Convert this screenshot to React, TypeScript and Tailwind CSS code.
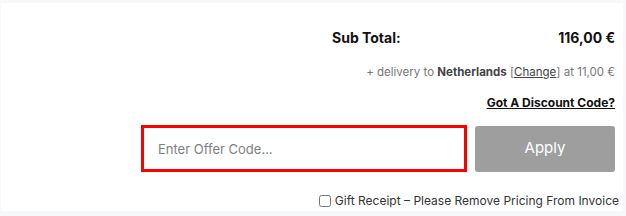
import { useState } from "react";

const font = { fontFamily: '"Inter", "Liberation Sans", sans-serif' };

export default function App() {
  const [code, setCode] = useState("");
  const [gift, setGift] = useState(false);

  return (
    <div className="w-[626px] h-[216px] bg-[#f7f8fa] pt-[3px] pl-px pr-[3px] overflow-hidden" style={font}>
      <div className="h-[208px] bg-white pr-[8px] flex flex-col items-end">
        {/* Sub total */}
        <div className="mt-[26px] w-[283px] h-[18px] flex items-center justify-between text-[14px] font-bold text-[#111] leading-none">
          <span>Sub Total:</span>
          <span>116,00 €</span>
        </div>

        {/* Delivery */}
        <div className="mt-[18px] h-[16px] flex items-center text-[11.5px] text-[#777] leading-none">
          <span>+ delivery to&nbsp;</span>
          <span className="font-bold text-[#444]">Netherlands</span>
          <span>&nbsp;[</span>
          <a href="#" className="underline text-[#444]">Change</a>
          <span>] at 11,00 €</span>
        </div>

        {/* Discount link */}
        <a href="#" className="mt-[14px] h-[16px] flex items-center text-[12px] font-bold text-[#111] underline leading-none">
          Got A Discount Code?
        </a>

        {/* Offer code */}
        <div className="mt-[14px] flex items-center gap-[8px]">
          <input
            value={code}
            onChange={(e) => setCode(e.target.value)}
            placeholder="Enter Offer Code..."
            className="w-[326px] h-[47px] border-[3px] border-[#ff0000] px-[14px] text-[13px] text-[#333] placeholder:text-[#808080] outline-none"
          />
          <button className="w-[140px] h-[46px] rounded-[3px] bg-[#9e9e9e] text-white text-[15px]">
            Apply
          </button>
        </div>

        {/* Gift receipt */}
        <label className="mt-[23px] mr-[-4px] flex items-center gap-[4px] text-[12px] text-[#333] leading-none">
          <input
            type="checkbox"
            checked={gift}
            onChange={(e) => setGift(e.target.checked)}
            className="w-[12px] h-[12px] m-0"
          />
          <span>Gift Receipt – Please Remove Pricing From Invoice</span>
        </label>
      </div>
    </div>
  );
}
